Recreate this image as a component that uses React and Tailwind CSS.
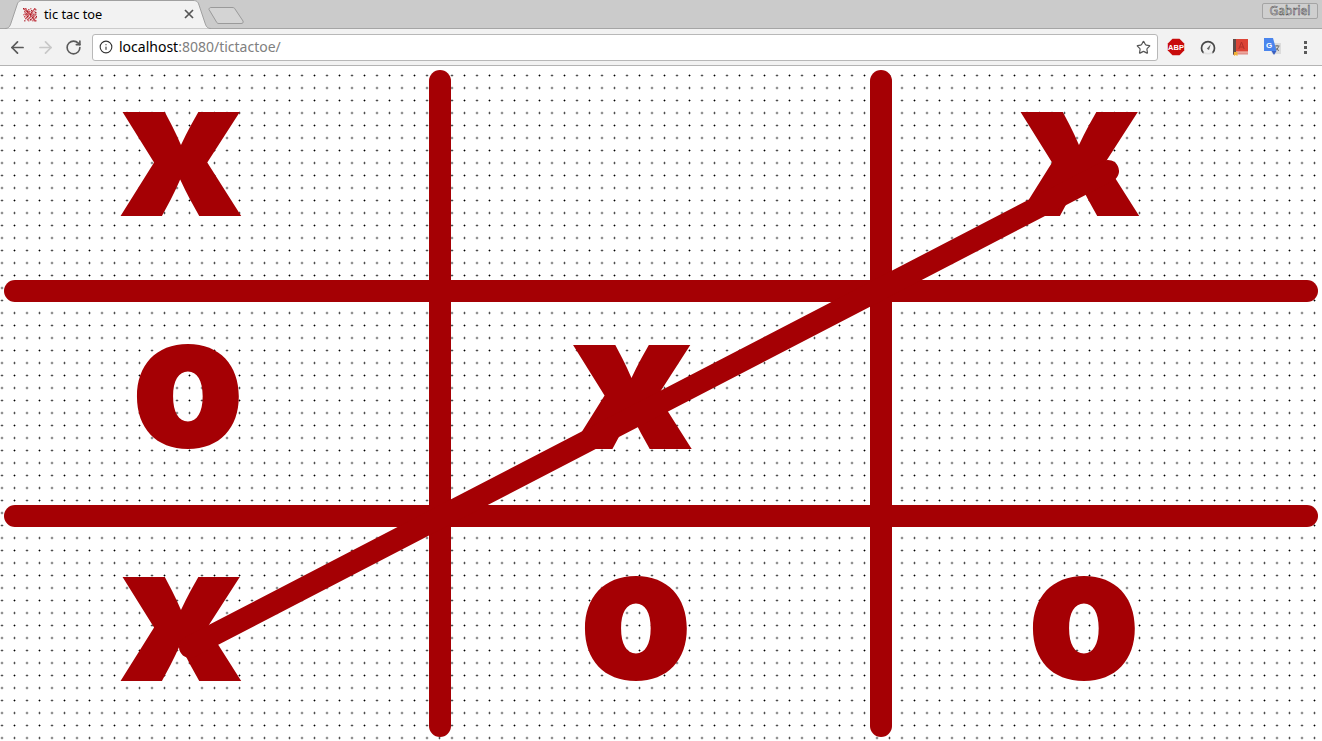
import { ArrowLeft, ArrowRight, RotateCw, Info, Star } from 'lucide-react';

const RED = '#a50004';

// board marks: cx/cy is the glyph centre, y the baseline, in board coordinates
const marks = [
  { t: 'x', x: 181, y: 151, cy: 98 },
  { t: 'x', x: 1079, y: 151, cy: 98 },
  { t: 'x', x: 631.5, y: 384, cy: 331 },
  { t: 'x', x: 181, y: 616, cy: 563 },
  { t: 'o', x: 188, y: 383, cy: 331 },
  { t: 'o', x: 636, y: 615, cy: 563 },
  { t: 'o', x: 1084, y: 615, cy: 563 },
];

const lines = [
  [440, 15, 440, 660],
  [881, 15, 881, 660],
  [15, 225, 1307, 225],
  [15, 450, 1307, 450],
];

// noisy little favicon
const faviconCells = [
  [1, 1], [2, 2], [3, 1], [4, 3], [6, 2], [8, 1], [9, 3], [11, 2], [12, 1], [13, 2],
  [2, 4], [3, 5], [5, 4], [6, 5], [7, 4], [9, 5], [10, 4], [12, 4], [13, 5],
  [1, 7], [3, 7], [4, 6], [5, 7], [7, 6], [8, 7], [9, 6], [11, 7], [13, 7],
  [2, 9], [4, 8], [5, 9], [6, 8], [8, 9], [10, 8], [11, 9], [12, 8], [14, 9],
  [3, 11], [4, 10], [6, 11], [7, 10], [9, 11], [10, 10], [12, 11], [13, 10],
  [2, 13], [5, 12], [6, 13], [8, 12], [10, 13], [11, 12], [12, 13], [13, 13],
];

function Favicon() {
  return (
    <svg width="15" height="15" viewBox="0 0 15 15" className="shrink-0">
      <path d="M1 1l12 12M13 2L3 12M4 2l7 9M2 7h11" stroke="#c9666c" strokeWidth="1" fill="none" />
      {faviconCells.map(([x, y], i) => (
        <rect key={i} x={x} y={y} width="1.500" height="1.500" fill={i % 3 === 0 ? '#a8141e' : '#c9454e'} opacity={i % 2 === 0 ? 0.95 : 0.65} />
      ))}
    </svg>
  );
}

function Abp() {
  return (
    <svg width="18" height="18" viewBox="0 0 18 18">
      <path d="M5.500 .8h7L17.200 5.500v7L12.500 17.200h-7L.8 12.500v-7z" fill="#c80b0b" />
      <text x="9" y="11.800" textAnchor="middle" fontSize="7.500" fontWeight="700" fill="#fff" fontFamily="'Liberation Sans', sans-serif">ABP</text>
    </svg>
  );
}

function Gauge() {
  return (
    <svg width="16" height="16" viewBox="0 0 16 16" fill="none">
      <path d="M3.200 13.500A6.500 6.500 0 1 1 12.800 13.500" stroke="#484848" strokeWidth="1.700" strokeLinecap="round" />
      <path d="M3.500 13.800Q8 15.500 12.500 13.800" stroke="#e2e2e2" strokeWidth="1.500" />
      <path d="M6.800 9.800L10.800 5.200L9 11z" fill="#666" />
    </svg>
  );
}

function Book() {
  return (
    <svg width="15" height="17" viewBox="0 0 15 17">
      <rect x="0" y="0" width="15" height="15.500" fill="#dc4437" />
      <rect x="0" y="0" width="3" height="15.500" fill="#5c4c4a" />
      <rect x="3" y="12.500" width="12" height="1.200" fill="#f4d0c8" />
      <rect x="3" y="14.500" width="12" height="1" fill="#e8e0e0" />
      <path d="M1 13h3.500v4L2.700 16 1 17z" fill="#f2b134" />
      <path d="M5.800 10l2.700-7 2.700 7M7 8h3" stroke="#b0302a" strokeWidth="1" fill="none" />
    </svg>
  );
}

function Translate() {
  return (
    <svg width="17" height="18" viewBox="0 0 17 18">
      <path d="M6 5h11v11H8z" fill="#dcdcdc" />
      <path d="M10.500 8h5M13 7v1M14.500 8.500c-.5 2-2 3.500-3.500 4.500M11.500 9.500c.7 1.300 2 2.500 3.500 3" stroke="#6a6a6a" strokeWidth="1" fill="none" />
      <path d="M0 0h9l3.500 13H0z" fill="#4a85ed" />
      <path d="M7.500 13h5l-2.500 4z" fill="#3a5fc0" />
      <text x="2" y="9.500" fontSize="8" fontWeight="700" fill="#fff" fontFamily="'Liberation Sans', sans-serif">G</text>
    </svg>
  );
}

export default function App() {
  return (
    <div className="h-[741px] w-[1322px] flex flex-col overflow-hidden bg-white font-['Noto_Sans',sans-serif]">
      {/* tab strip */}
      <div className="relative h-[29px] shrink-0 bg-[#cbcbcb] border-b border-[#a5a5a5] flex">
        <svg width="250" height="29" viewBox="0 0 250 29" className="absolute left-0 top-0">
          <path d="M5 28.500C9 28.500 10 26 11 23L17 5C18 2 19 .5 23 .5H193C197 .5 198 2 199 5L205 23C206 26 207 28.500 211 28.500" fill="#f2f2f2" stroke="#a0a0a0" />
          <path d="M209 9.500C209 8 210 7.500 211 7.500H232C234 7.500 234.500 8 235 9L243 21C243.500 22.500 243 23.500 241 23.500H219C217.500 23.500 217 23 216.500 22z" fill="#d4d4d4" stroke="#9a9a9a" />
        </svg>
        <div className="relative ml-[22px] w-[175px] h-[28px] flex items-center">
          <Favicon />
          <span className="ml-[7px] text-[12.800px] text-black leading-none">tic tac toe</span>
          <svg width="10" height="10" viewBox="0 0 10 10" className="ml-auto mr-[3px]">
            <path d="M1 1l8 8M9 1l-8 8" stroke="#555" strokeWidth="1.700" />
          </svg>
        </div>
        <div className="relative ml-auto mr-[4px] mt-[3px] w-[56px] h-[16px] rounded-[2px] border border-[#a4a4a4] bg-[#cfcfcf] flex items-center justify-center text-[12px] leading-none text-[#f4f4f4] [-webkit-text-stroke:0.5px_#3c3c3c]">
          Gabriel
        </div>
      </div>

      {/* toolbar */}
      <div className="h-[37px] shrink-0 bg-[#f2f2f2] border-b border-[#b4b4b4] flex items-center">
        <ArrowLeft size={19} strokeWidth={2.200} className="ml-[8px] text-[#5a5a5a]" />
        <ArrowRight size={19} strokeWidth={2.200} className="ml-[9px] text-[#c8c8c8]" />
        <RotateCw size={17} strokeWidth={2.300} className="ml-[10px] text-[#5a5a5a]" />
        <div className="ml-[10px] w-[1066px] h-[27px] bg-white border border-[#b8b8b8] rounded-[3px] flex items-center">
          <Info size={14} strokeWidth={1.900} className="ml-[6px] text-[#333]" />
          <span className="ml-[6px] text-[14px] leading-none text-black">localhost<span className="text-[#808080]">:8080/tictactoe/</span></span>
          <Star size={15} strokeWidth={1.900} className="ml-auto mr-[6px] text-[#555]" />
        </div>
        <div className="ml-[9px]"><Abp /></div>
        <div className="ml-[15px]"><Gauge /></div>
        <div className="ml-[17px]"><Book /></div>
        <div className="ml-[16px]"><Translate /></div>
        <div className="ml-[23px] flex flex-col gap-[2px]">
          <span className="w-[3px] h-[3px] bg-[#5a5a5a]" />
          <span className="w-[3px] h-[3px] bg-[#5a5a5a]" />
          <span className="w-[3px] h-[3px] bg-[#5a5a5a]" />
        </div>
      </div>

      {/* dotted board */}
      <div className="flex-1 bg-[radial-gradient(circle,#000_0.6px,transparent_1.2px)] bg-[length:12.5px_12.5px] bg-[position:-4.25px_3.25px]">
        <svg width="1322" height="675" viewBox="0 0 1322 675" className="overflow-visible font-['Inter',sans-serif]">
          {lines.map((l, i) => (
            <line key={i} x1={l[0]} y1={l[1]} x2={l[2]} y2={l[3]} stroke={RED} strokeWidth="22" strokeLinecap="round" />
          ))}
          {marks.map((m, i) => {
            const sx = m.t === 'x' ? 1.06 : 0.93;
            const sy = m.t === 'x' ? 0.98 : 0.965;
            return (
              <text
                key={i}
                x={m.x}
                y={m.y}
                textAnchor="middle"
                fontSize="194"
                fontWeight="900"
                fill={RED}
                transform={`translate(${m.x} ${m.cy}) scale(${sx} ${sy}) translate(${-m.x} ${-m.cy})`}
              >
                {m.t}
              </text>
            );
          })}
          <line x1="190" y1="581" x2="1108" y2="105" stroke={RED} strokeWidth="22" strokeLinecap="round" />
        </svg>
      </div>
    </div>
  );
}
